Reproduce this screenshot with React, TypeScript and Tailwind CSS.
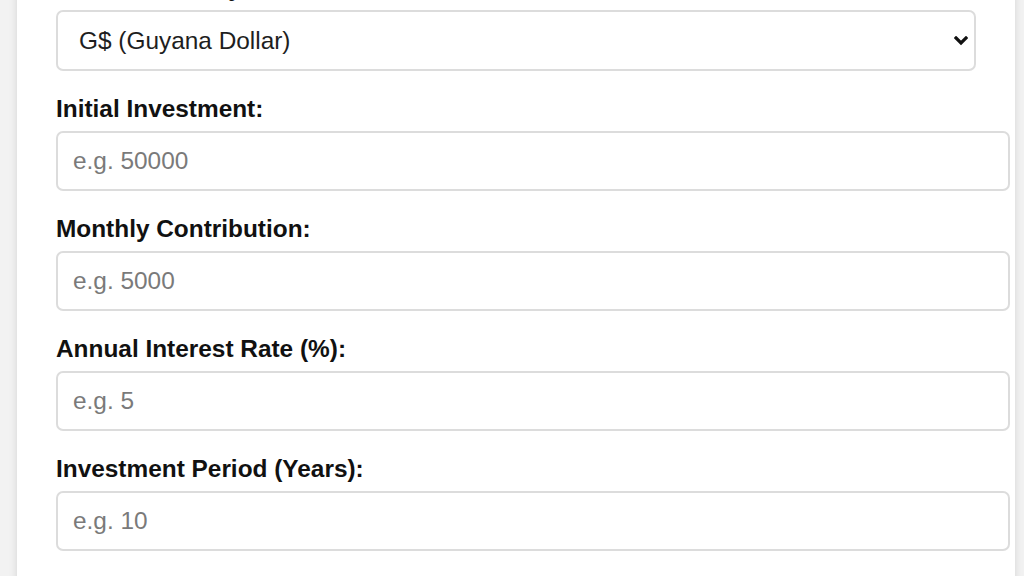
import React from "react";

const fields = [
  { label: "Initial Investment:", placeholder: "e.g. 50000" },
  { label: "Monthly Contribution:", placeholder: "e.g. 5000" },
  { label: "Annual Interest Rate (%):", placeholder: "e.g. 5" },
  { label: "Investment Period (Years):", placeholder: "e.g. 10" },
];

export default function App() {
  return (
    <div
      className="h-[576px] w-[1024px] overflow-hidden bg-[#f2f2f2]"
      style={{ fontFamily: '"Liberation Sans", Arial, sans-serif' }}
    >
      <div className="ml-[17px] -mt-[26px] w-[998px] bg-white px-[39px] pb-[40px] shadow-[0_0_8px_rgba(0,0,0,0.12)]">
        <div className="flex flex-col gap-[24px]">
          <div className="flex flex-col">
            <label className="mb-[8px] block text-[24.4px] font-bold leading-[28px] text-[#111]">
              Select Currency:
            </label>
            <div className="relative">
              <select
                className="block h-[61px] w-full appearance-none rounded-[7px] border-2 border-[#dcdcdc] bg-white pl-[21px] pr-[40px] text-[24.4px] leading-[28px] text-[#1e1e1e] outline-none"
                defaultValue="GYD"
              >
                <option value="GYD">G$ (Guyana Dollar)</option>
                <option value="USD">US$ (US Dollar)</option>
              </select>
              <svg
                className="pointer-events-none absolute right-[8px] top-[26px]"
                width="14"
                height="10"
                viewBox="0 0 14 10"
              >
                <path
                  d="M2 2 L7 7 L12 2"
                  fill="none"
                  stroke="#111"
                  strokeWidth="3.2"
                  strokeLinecap="square"
                />
              </svg>
            </div>
          </div>
          {fields.map((f) => (
            <div key={f.label} className="flex flex-col">
              <label className="mb-[8px] block text-[24.4px] font-bold leading-[28px] text-[#111]">
                {f.label}
              </label>
              <input
                type="text"
                placeholder={f.placeholder}
                className="box-content block h-[28px] w-full rounded-[7px] border-2 border-[#dcdcdc] bg-white px-[15px] py-[14px] text-[24.4px] leading-[28px] text-[#1e1e1e] outline-none placeholder:text-[#7a7a7a]"
              />
            </div>
          ))}
        </div>
      </div>
    </div>
  );
}
